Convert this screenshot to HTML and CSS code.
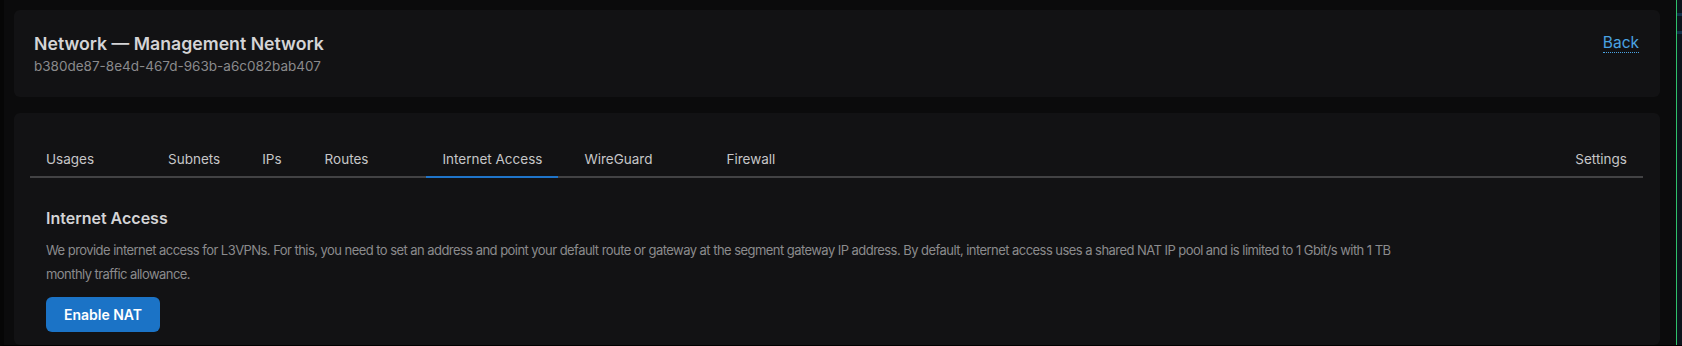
FILE: index.html
```html
<!DOCTYPE html>
<html lang="en">
<head>
<meta charset="utf-8">
<title>Network — Management Network</title>
<link rel="stylesheet" href="styles.css">
</head>
<body>
<div class="frame">
  <main class="main">
    <section class="card header-card">
      <div class="header-text">
        <h1 class="title">Network — Management Network</h1>
        <div class="subtitle">b380de87-8e4d-467d-963b-a6c082bab407</div>
      </div>
      <a class="back" href="#">Back</a>
    </section>
    <section class="card body-card">
      <nav class="tabs">
        <a class="tab tab--wide" href="#">Usages</a>
        <a class="tab" href="#">Subnets</a>
        <a class="tab" href="#">IPs</a>
        <a class="tab tab--wide tab--routes" href="#">Routes</a>
        <a class="tab tab--active" href="#">Internet Access</a>
        <a class="tab tab--wide" href="#">WireGuard</a>
        <a class="tab" href="#">Firewall</a>
        <span class="tabs-spacer"></span>
        <a class="tab" href="#">Settings</a>
      </nav>
      <div class="panel">
        <h2 class="panel-title">Internet Access</h2>
        <p class="panel-text">We provide internet access for L3VPNs. For this, you need to set an address and point your default route or gateway at the segment gateway IP address. By default, internet access uses a shared NAT IP pool and is limited to 1 Gbit/s with 1 TB monthly traffic allowance.</p>
        <button class="btn-primary" type="button">Enable NAT</button>
      </div>
    </section>
  </main>
  <aside class="side-strip">
    <span class="side-mark side-mark--a"></span>
    <span class="side-mark side-mark--b"></span>
  </aside>
</div>
</body>
</html>
```

FILE: styles.css
```css
* { box-sizing: border-box; }

html, body {
  margin: 0;
  padding: 0;
  height: 100%;
  background: #0b0b0c;
  font-family: Inter, "Noto Sans", "Liberation Sans", sans-serif;
  color: #d2d2d4;
  overflow: hidden;
}

.frame {
  display: flex;
  height: 346px;
  border-left: 4px solid #060606;
  border-bottom: 1px solid #000;
}

.main {
  flex: 1;
  display: flex;
  flex-direction: column;
  gap: 16px;
  padding: 10px 16px 0 10px;
  min-width: 0;
}

.card {
  background: #121214;
  border-radius: 6px;
}

.header-card {
  display: flex;
  justify-content: space-between;
  align-items: flex-start;
  padding: 22px 21px 21px 20px;
}

.title {
  margin: 0;
  font-size: 17.7px;
  line-height: 24px;
  font-weight: 600;
  color: #d4d4d6;
}

.subtitle {
  font-size: 13.5px;
  line-height: 20px;
  color: #8a8a8c;
}

.back {
  margin-top: 2px;
  font-size: 15.5px;
  line-height: 18px;
  color: #4aa3e3;
  text-decoration: none;
  border-bottom: 1px dotted #4aa3e3;
}

.body-card {
  flex: 1;
  padding: 26px 17px 0 16px;
}

.tabs {
  display: flex;
  align-items: flex-end;
  border-bottom: 2px solid #424244;
}

.tab {
  padding: 10px 16px 7px;
  font-size: 13.5px;
  line-height: 20px;
  color: #c6c6c8;
  text-decoration: none;
  margin-right: 10px;
}

.tab--wide { padding-right: 48px; }
.tab--routes { padding-left: 17px; }

.tab--active {
  border-bottom: 2px solid #1f74c9;
  margin-bottom: -2px;
}

.tabs-spacer { flex: 1; }

.tabs .tab:last-child { margin-right: 0; }

.panel {
  padding: 29px 16px 0;
}

.panel-title {
  margin: 0;
  font-size: 16px;
  line-height: 22px;
  font-weight: 600;
  color: #d4d4d6;
}

.panel-text {
  margin: 9px 0 11px;
  max-width: 1370px;
  font-size: 13px;
  line-height: 24px;
  letter-spacing: -0.55px;
  color: #8b8b8d;
}

.btn-primary {
  display: inline-flex;
  align-items: center;
  justify-content: center;
  width: 114px;
  height: 35px;
  border: none;
  border-radius: 6px;
  background: #1b73c6;
  color: #ffffff;
  font-family: inherit;
  font-size: 14px;
  font-weight: 600;
  cursor: pointer;
}

.side-strip {
  position: relative;
  width: 6px;
  border-left: 1px solid #2fc06a;
  background: #0c141c;
}

.side-mark {
  position: absolute;
  left: 0;
  right: 0;
  height: 3px;
  background: #12304a;
}

.side-mark--a { top: 13px; }
.side-mark--b { top: 31px; }
```
